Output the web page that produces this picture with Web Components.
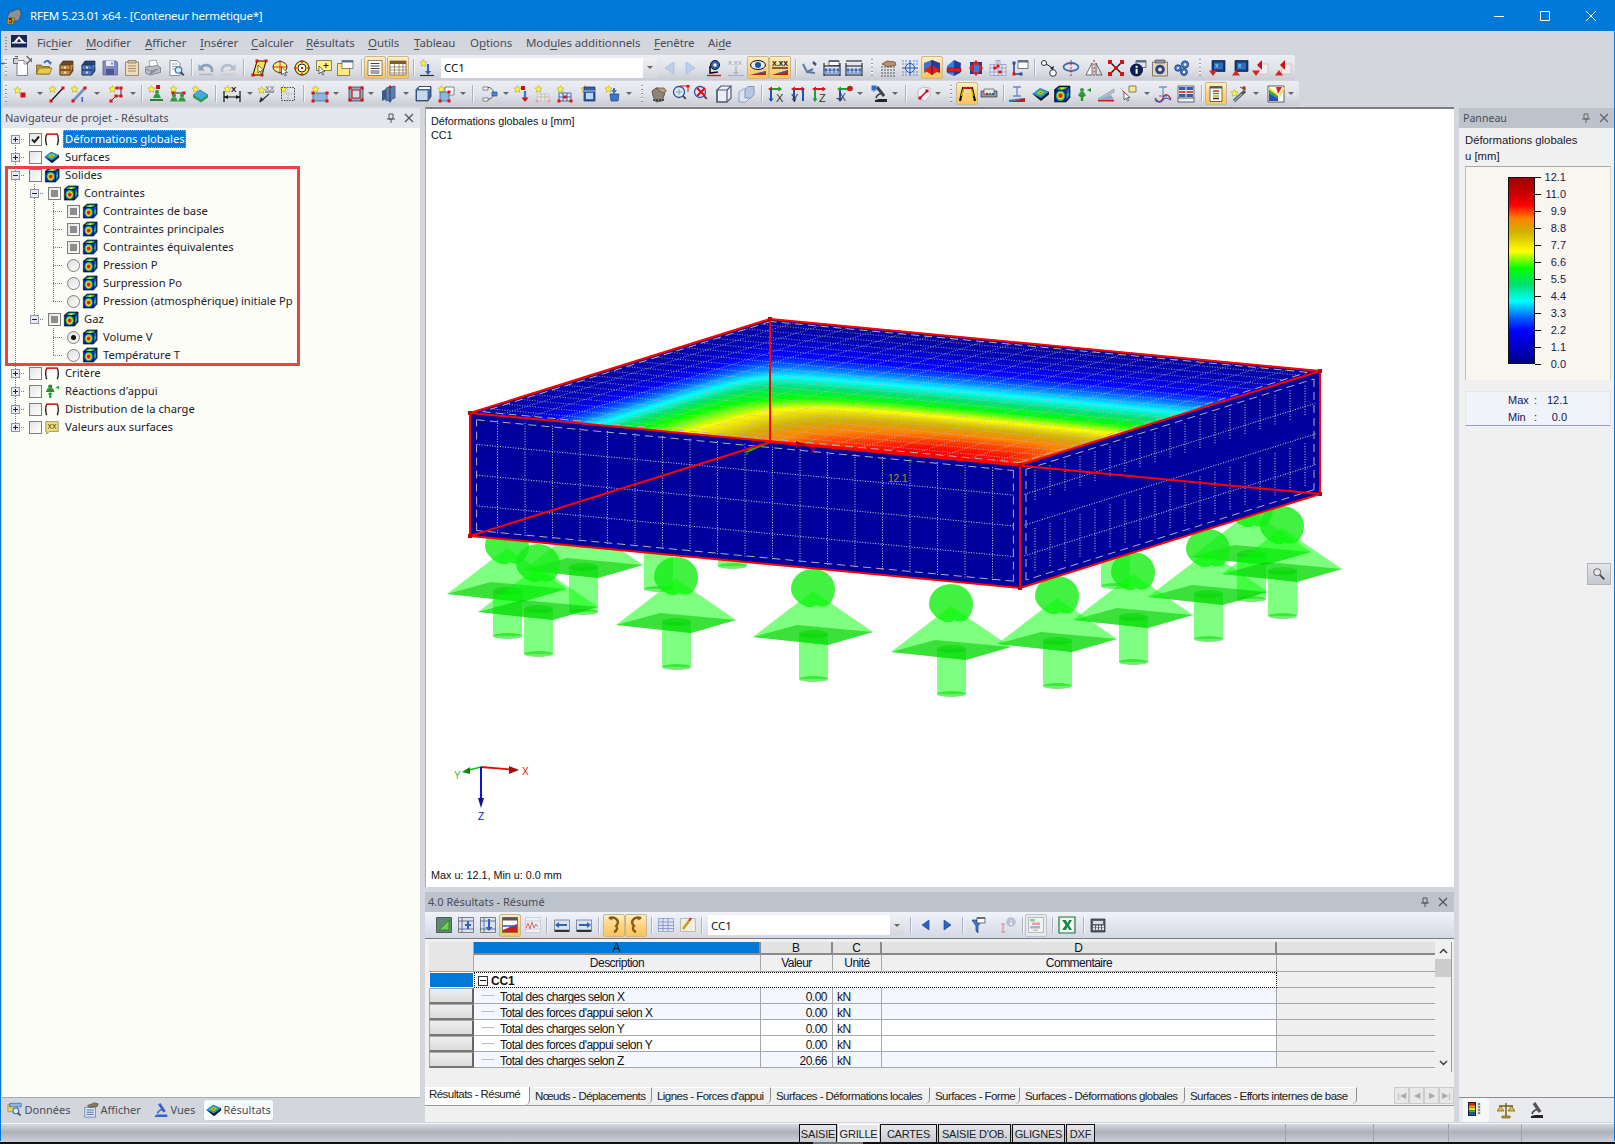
<!DOCTYPE html>
<html lang="fr"><head><meta charset="utf-8"><title>RFEM</title>
<style>html,body{margin:0;padding:0;background:#d3d6dd;overflow:hidden;width:1615px;height:1144px}</style>
<script>
/* ---------- icon library, 18x18 ---------- */
const st=(x=0,y=0)=>`<path transform="translate(${x} ${y})" d="M4.5 .5l1.1 2.3 2.5.3-1.8 1.7.5 2.5-2.3-1.2-2.3 1.2.5-2.5L.9 3.1l2.5-.3z" fill="#fff23a" stroke="#9a9a3a" stroke-width=".5"/>`;
const n=(x,y,c='#e01010',s=3)=>`<rect x="${x-s/2}" y="${y-s/2}" width="${s}" height="${s}" fill="${c}"/>`;
const l=(d,c='#333',w=1,x='')=>`<path d="${d}" fill="none" stroke="${c}" stroke-width="${w}" ${x}/>`;
const f=(d,c,s='none',w=.7)=>`<path d="${d}" fill="${c}" stroke="${s}" stroke-width="${w}"/>`;
const tx=(x,y,t,c='#222',z=6,b=400)=>`<text x="${x}" y="${y}" font-family="Liberation Sans" font-size="${z}" font-weight="${b}" fill="${c}">${t}</text>`;
const drawer=(a,b,e)=>f('M3 6l3-4h10v10l-3 4H3z',a,e)+f('M13 16V6h3',b)+f('M3 6h10v5H3zM3 11h10v5H3z',b,e)+n(8,8.5,'#ddd',2)+n(8,13.5,'#ddd',2);
const mag=(x,y,r=3.2,c='#3b78c8')=>`<circle cx="${x}" cy="${y}" r="${r}" fill="#d8ecff" stroke="${c}" stroke-width="1.3"/>`+l(`M${x+r*.7} ${y+r*.7}l3 3`,'#444',1.8);
const cur=(x,y)=>f(`M${x} ${y}v8l2-2 1.5 3 1.2-.6-1.4-2.8h2.7z`,'#fff','#333',.7);
const hm=(cx,cy)=>`<ellipse cx="${cx}" cy="${cy}" rx="4.6" ry="5.2" fill="#18c050"/><ellipse cx="${cx}" cy="${cy}" rx="3.4" ry="3.8" fill="#f0e020"/><ellipse cx="${cx}" cy="${cy}" rx="2.2" ry="2.4" fill="#e8201c"/>`;
const cube=`<path d="M1.5 4.5L6 1h11v11.5L13 17H1.5z" fill="#0c1a3a" stroke="#0a0f20" stroke-width=".6"/><path d="M2.5 5.5h10V16h-10z" fill="#1018d0"/>`+hm(7.5,10.7)+`<path d="M3.5 4.5l3-2.5h8.5l-2.5 2.5z" fill="#1fb880"/><path d="M7 4.5l1.5-2h3l-1.5 2z" fill="#e6e030"/><path d="M13.5 5.5L16 3v9l-2.5 3z" fill="#1a60d8"/><path d="M13.8 9l1.9-2v3.5l-1.9 2z" fill="#20c060"/>`;
const dia=f('M.5 9L8 3.5 17 7v2.5L9 16z','#10182c')+f('M.5 8.7L8 3 17 6.7 9 13z','#2a8fd8')+f('M3 8.4l5-3.8 6 2.4-5.2 3.9z','#23c45a')+f('M5 8.1L8.2 5.7 12 7.2 8.8 9.6z','#f2d320')+f('M6.8 7.9l1.5-1.1 1.9.7-1.5 1.1z','#e8281c');
const arch=l('M3 16C1.4 11 1.4 7 3.3 3.2','#1a1a1a',1.5)+l('M15 16c1.6-5 1.6-9-.3-12.8','#1a1a1a',1.5)+l('M3.2 3.5h11.6','#d01818',1.8)+l('M2.6 5l.7-1.6M15.4 5l-.7-1.6','#d01818',1.6);
const man=(x,y,c='#2f9a3a')=>`<circle cx="${x}" cy="${y}" r="2" fill="${c}"/><path d="M${x-4} ${y+6}l2-4h4l2 4z" fill="${c}"/>`;
const beads=`<path d="M1 16h16M1 7h16" stroke="#111" stroke-width="1"/><path d="M1 4v13M17 4v13" stroke="#111"/>`+[4,8,12,16].map(x=>`<circle cx="${x-1}" cy="11" r="1.7" fill="#3a6cc0"/><circle cx="${x-1}" cy="14" r="1.7" fill="#7a9ad8"/>`).join('');
const axs=(h,v)=>l('M3 4h11',h,2)+f('M1 4l4-2.5v5z',h)+f('M15 4l-3.5-2.5v5z',h)+l('M4 5v10',v,2)+f('M4 17l-2.5-3.5h5z',v);
const I={
new:f('M4 1.5h7l3.5 3.5v11.5H4z','#fff','#555')+l('M11 1.5V5h3.5','#777',.7),
open:f('M1.5 6h5l1 1.5h7V15h-13z','#b89a2e','#6a5612')+f('M1.5 15l2.5-6h13l-2.5 6z','#e8c84e','#7a6618')+l('M9 4c2-3 5-3 6 0','#3f6fb0',1.8)+f('M15.5 6l-2.5-2.5 3.8-.7z','#3f6fb0'),
cab:drawer('#6b4a26','#c98f46','#4a3014'),
cabb:drawer('#27406f','#4f7ac8','#1c2f54'),
save:f('M2 2h13l1.5 1.5V16H2z','#7f8ac4','#4d5690')+f('M5 2h8v5H5z','#e8eaf4')+f('M5 10h8v6H5z','#4d5690')+n(11,4.5,'#7f8ac4',2),
notes:f('M2.5 3h13v13.5h-13z','#efdcb8','#7a6a50')+f('M5 1.5h8V4H5z','#d8c6a2','#7a6a50')+l('M5 7h8M5 9.5h8M5 12h8','#8a7a60',.8),
print:f('M5 2l7-1 2 6-8 1z','#fff','#888')+f('M1.5 8l12-1.5 3 2v5L6 16l-4.5-2z','#b9bdc6','#6d7078')+f('M6 16v-4.5l10.5-2.5','#8e929c')+l('M2 10.5l4 1','#777',.7),
prev:f('M3 1.5h7l3 3v12H3z','#fff','#666')+l('M5 5h5M5 7.5h6M5 10h3','#888',.8)+mag(11.5,11,3.2),
undo:l('M4 9c2-4 9-4 11 1v3','#8aa1bd',2.6)+f('M1.5 5v6.5h6.5z','#8aa1bd')+l('M2 15.5h14','#aab8cc',1.4),
redo:l('M14 9c-2-4-9-4-11 1v3','#b2bfce',2.6)+f('M16.5 5v6.5h-6.5z','#b2bfce')+l('M2 15.5h14','#c4ced9',1.4),
par:f('M3 16L7 2h9l-4 14z','#ffe23c','#111',1)+n(3,16)+n(7,2)+n(16,2)+n(12,16)+cur(8,6),
scirc:`<ellipse cx="8" cy="8" rx="7" ry="5.5" fill="#fff27e" stroke="#333"/>`+l('M8 1v14M1 8h14','#d01818',.9)+cur(9.5,8),
ring:`<circle cx="9" cy="9" r="7" fill="#ffe23c" stroke="#222"/><circle cx="9" cy="9" r="4" fill="#fff" stroke="#222"/>`+l('M9 1v3M9 14v3M1 9h3M14 9h3','#d01818',1.2)+n(9,9,'#d01818',2),
snote:f('M1.5 1.5h15v10h-15z','#fff27e','#555')+l('M11 4v5M8.5 6.5h5','#222')+cur(4,7),
ywin:f('M1.5 4.5h12v12h-12z','#ffe97a','#555')+f('M6 1.5h11v8H6z','#fff','#555')+f('M6 1.5h11v2H6z','#5a6f8e'),
tlist:f('M2 1.5h14v15H2z','#fff','#555')+l('M4.5 4.5h9M4.5 7h9M4.5 9.5h9M4.5 12h9M4.5 14h9','#444',1.1),
tgrid:f('M1 2h16v14H1z','#fff','#555')+f('M1 2h16v3H1z','#7f5d2a')+l('M1 8h16M1 11h16M1 14h16M5.5 5v11M10 5v11M14 5v11','#8a7a5a',.8),
ldst:st(1,0)+l('M10 5v8','#2e62bc',2)+f('M10 16l-3-4h6z','#2e62bc')+l('M2 16.5h14','#333',1.2),
tl:f('M4 9l9-6v12z','#bcd0ec','#a2b7d8'),
tr:f('M14 9L5 3v12z','#bcd0ec','#a2b7d8'),
tlb:f('M5 9l7-5v10z','#2c62c4','#1e4aa0'),
trb:f('M13 9L6 4v10z','#2c62c4','#1e4aa0'),
pvis:`<circle cx="10" cy="6" r="4.5" fill="#2e62bc" stroke="#111"/><circle cx="10" cy="6" r="1.7" fill="#fff"/>`+l('M5 7v7l8-1','#111',1.6)+l('M2 16.5h14','#d01818',1.4),
xxd:tx(1,6,'X.XX','#9a9a9a',6)+l('M9 7v7','#b0b9c7',1.6)+f('M9 16l-3-3h6z','#b0b9c7')+l('M1 16.5h16','#a8b0c0',1),
eye:`<ellipse cx="9" cy="6" rx="7.5" ry="4.5" fill="#dfe8f8" stroke="#111"/><circle cx="9" cy="6" r="3" fill="#1f4fa8"/>`+f('M1 16l16-4v4z','#d01818')+f('M1 16l16-4v1.5L1 16z','#2e62bc'),
xx2:tx(1,7,'X.XX','#111',7,700)+l('M1 9h16','#111',1.2)+f('M1 16l16-5v5z','#d01818')+f('M1 16l16-5v2L1 16z','#2e62bc'),
gears:l('M2 5l4 8 6-3M6 13l8 1','#5e7a9e',2)+l('M12 3l3 3','#3d5679',2.5),
bm1:f('M6 1.5h10v5H6z','#fff','#444')+f('M6 1.5h10v1.5H6z','#4a5e7c')+beads,
bm2:beads+l('M1 2h16','#111',1),
hand:[3,6,9,12,15].map(x=>[8,11,14,17].map(y=>n(x,y,'#555',1.4)).join('')).join('')+f('M3 5l5-3 8 1 1 3-8 2z','#b9906c','#5c3c20'),
tgt:[2,5,13,16].map(x=>[2,5,13,16].map(y=>n(x,y,'#5577b8',1.3)).join('')).join('')+`<circle cx="9" cy="9" r="4.5" fill="#d8e8ff" stroke="#1e50b0"/>`+l('M9 1v16M1 9h16','#1e50b0',1),
pl1:f('M9 1l8 3v10L9 11z','#1e3fa0')+f('M9 1L1 4v10l8-3z','#3b6fd0')+f('M1 11l8-5 8 5-8 5z','#e01c1c')+f('M9 1v15','none','#111'),
pl2:f('M9 1l7 3-1 10-6 3z','#1e3fa0')+f('M9 1L2 7v7l7 3z','#3b7ae0')+f('M2 9h14v4H2z','#e01c1c','#7a0a0a',.5),
pl3:f('M3 3h12v12H3z','#1e3fa0')+f('M9 1l7 8-7 8-7-8z','#e01c1c')+f('M7 6h5v7H7z','#3b7ae0'),
pgrid:f('M7 1.5h4v4h6v11H1v-11h6z','#e4e8f4','#8a94b8')+l('M1 9h16M1 13h16M5 5v12M9 1v16M13 5v12','#8a94b8',.8)+n(6,9)+n(11,13)+n(9,7),
wline:f('M7 1.5h10v8H7z','#fff','#444')+f('M7 1.5h10v2H7z','#5a6f8e')+l('M3 4v11h7','#26509a',1.6)+n(3,4,'#26509a')+n(3,15)+n(10,15,'#26509a'),
cconn:`<circle cx="4" cy="4" r="2.5" fill="#fff" stroke="#333"/><circle cx="13" cy="14" r="3.3" fill="#fff" stroke="#333"/>`+l('M6 5l5 3 2 3','#222',1)+f('M14 7l-1 4-3-2z','#222'),
rot:`<ellipse cx="9" cy="8" rx="7.5" ry="4" fill="none" stroke="#3a6cc0" stroke-width="1.8"/>`+l('M9 1v16','#d01818',1,'stroke-dasharray="2 1.5"'),
mir:f('M1 16L7 4v12z','#fff','#333')+f('M17 16L11 4v12z','#d9dce4','#333')+l('M9 1v16','#d01818',1,'stroke-dasharray="2 1.5"'),
xred:l('M3 3l12 12M15 3L3 15','#111',1.4)+n(3,3,'#e01010',4)+n(15,3,'#e01010',4)+n(3,15,'#e01010',4)+n(15,15,'#e01010',4)+n(9,9,'#e01010',4),
info:f('M7 1.5h10v7H7z','#dfe2ea','#444')+f('M7 1.5h10v2H7z','#5a6f8e')+`<circle cx="7.5" cy="11" r="6.5" fill="#0c1e58"/><rect x="6.6" y="9.8" width="2" height="5" fill="#fff"/><rect x="6.6" y="6.8" width="2" height="2" fill="#fff"/>`,
setb:f('M1.5 3h15v14h-15z','#e8d6b4','#555')+f('M4 1h10v3H4z','#8a94a8','#555')+`<circle cx="9" cy="10.5" r="4.8" fill="#2a4488"/><circle cx="9" cy="10.5" r="1.9" fill="#efe0c4"/>`,
gearb:`<circle cx="12" cy="5.5" r="3.6" fill="#4d7fd0" stroke="#1d3f88"/><circle cx="5" cy="9" r="3.2" fill="#4d7fd0" stroke="#1d3f88"/><circle cx="11" cy="13" r="3.4" fill="#4d7fd0" stroke="#1d3f88"/><circle cx="12" cy="5.5" r="1.2" fill="#fff"/><circle cx="5" cy="9" r="1.1" fill="#fff"/><circle cx="11" cy="13" r="1.2" fill="#fff"/>`,
bq1:f('M4 1.5h13v11H4z','#16386e','#0e2244')+f('M6 3.5h9v7H6z','#2a6cc0')+tx(7,9,'X','#bfe','5')+f('M5 17L1 11.5h8z','#e02020'),
bq2:f('M4 1.5h13v11H4z','#16386e','#0e2244')+f('M6 3.5h9v7H6z','#2a6cc0')+tx(7,9,'X','#bfe','5')+f('M5 11L1 16.5h8z','#e02020'),
rq1:f('M8 5h9v10H8z','#eee','#bbb')+f('M11 1l-5 5 5 5z','#c8141c')+f('M5 17L1 11.5h8z','#e02020'),
rq2:f('M8 5h9v10H8z','#eee','#bbb')+f('M11 1l-5 5 5 5z','#c8141c')+f('M5 11L1 16.5h8z','#e02020'),
/* row 2 */
snode:st(1,1)+n(11,10,'#d81010',5),
sline:st(0,0)+l('M3 16L15 3','#111',1.2)+n(3,16)+n(15,3),
sbeam:st(0,0)+l('M3 16L15 3','#7a8fc0',2.6)+n(3,16)+n(15,3)+tx(11,17,'I','#2a3fa0',8,700),
spoly:st(0,0)+l('M3 16l5-5h5V3H9','#333',1)+n(3,16)+n(8,11)+n(13,11)+n(13,3)+n(9,3),
sman:st(0,0)+n(11,2,'#d01010',4)+man(10,7,'#2f9a3a')+f('M3 16h13v-2H3z','#2c7f38'),
s2man:st(0,0)+l('M4 8h11','#222')+n(15,8)+n(4,8)+man(5,10.5,'#2f9a3a')+man(13,10.5,'#2f9a3a'),
sslab:st(0,0)+f('M2 10l7-5 8 5-7 5z','#46a8e0','#1c6a9c')+f('M2 10l8 5v2.5l-8-5zM10 15l7-5v2.5l-7 5z','#2e9e44'),
sdim:st(0,0)+l('M1 6v11M17 6v11','#111',1.2)+l('M1 12h16','#111',1)+f('M1 12l4-2v4zM17 12l-4-2v4z','#111')+tx(8,7,'X','#111',8,700),
sxx:st(0,1)+tx(8,6,'XX','#666',7)+l('M8 7h9','#555',1)+l('M12 9l-9 8','#333',1.2)+f('M2 17l2-5 3 3z','#333'),
sdot:st(0,0)+l('M2.5 2.5h13v13h-13z','#444',1,'stroke-dasharray="1.5 1.2"')+l('M9 2v14M2 9h14','#888',.7,'stroke-dasharray="1 1.5"'),
srect:st(0,0)+f('M2 8h14v8H2z','#8cb6e0','#2e5e98')+n(2,8)+n(16,16)+n(2,16)+n(16,8),
frame:f('M2 2h14v14H2z','#8ea9cc','#333')+f('M5 5h8v8H5z','#d6deea','#c01818',1.2)+n(3,3,'#e01010',3)+n(15,3,'#e01010',3)+n(3,15,'#e01010',3)+n(15,15,'#e01010',3),
arrows:f('M5 3l9-2v12l-9 3z','#5c7fb0','#2c4a74')+f('M1 6l4-2v10l-4 2z','#3b5a88')+l('M9 1v16','#333',.9)+f('M9 0l-2 3h4z','#d01010')+f('M9 18l-2-3h4z','#2050c0'),
cube1:f('M2 4.5L5 1.5h12v10l-3 4.5H2z','#3a6ab0','#223')+f('M3 5.5h10.5V15H3z','#c8d7ec')+f('M5 2h11v2H5z','#fff'),
srect2:st(0,0)+f('M8 2h9v8H8z','#fff','#556')+f('M3 7h9v9H3z','#8cb6e0','#2e5e98')+n(3,16)+n(12,16)+n(12,7),
conn:l('M2 2.5h7l3 3v6l-3 2.5H2','#555',.9)+f('M2 2h5v3H2zM2 13h5v3H2z','#fff','#555')+f('M11 7h5v4h-5z','#3f88dd','#1c4f98'),
sarr:st(0,0)+n(10,3,'#d01010',4)+l('M12 6v7','#3e78d0',2.4)+f('M12 17l-3.5-4.5h7z','#d01010'),
pgs:st(0,0)+f('M3 9h12v7H3z','#e3e8f4','#b8c0d8')+l('M3 12h12M7 9v7M11 9v7','#c8b088',.8)+n(3,16,'#f4a0a0')+n(15,16,'#f4a0a0'),
sgrd:st(0,0)+f('M3 8h12v8H3z','#dbe6f8','#1c3f88')+l('M3 12h12M7 8v8M11 8v8','#1c3f88',.8)+n(3,16)+n(15,16)+n(9,12),
spile:st(0,0)+f('M4 2h11v14H4z','#3462a6','#162a4a')+f('M6 8h7v6H6z','#bcd6f4')+l('M4 6h11','#b0c8e8'),
sbuck:st(0,0)+f('M6 9h9l-1 7H7z','#3c78c8','#1e3f78')+l('M10 3v6','#3c78c8',2)+f('M10 9l-3-4h6z','#3c78c8'),
handb:f('M2 6l4-3 6 1 3 4-3 8-6 1-3-6z','#8f8478','#3e3830')+f('M6 3h8l2.5 3-4 2z','#b9a080','#5c4a30')+[4,7,10,13].map(x=>n(x,15,'#333',1.8)).join(''),
zwin:mag(7,7,5.5,'#2a4f94')+l('M7 4v6M4 7h6','#888',.8)+l('M8 1h8v6','#d01010',.9)+n(16,1),
zx:mag(7,7,5.5,'#2a4f94')+l('M4 3l8 8M12 3l-8 8','#e01010',2.2),
cwire:f('M2 5l4-4h10v12l-4 4H2z','#eaeef6','#4d5a70',1.2)+f('M2 5h10v12H2z','none','#4d5a70',1.2)+l('M12 5l4-4','#4d5a70',1.2),
cube2:f('M2 7l4-3h7v9l-4 4H2z','#dbe4f2','#7a8aa8')+f('M8 5l3-3.5h6v8L14 13H8z','#b6c8e2','#6a7a98'),
ax:axs('#d81818','#1e50c0')+l('M5 4l9 0','#20a030',2)+tx(9,17,'X','#333',11),
ay:axs('#d81818','#1e50c0')+tx(1,17,'Y','#333',11)+l('M13 4v12','#1e50c0',2),
az:axs('#d81818','#20a030')+tx(8,17,'Z','#333',11),
amx:axs('#20a030','#1e50c0')+tx(0,16,'-X','#333',10)+`<circle cx="14" cy="3.5" r="2.8" fill="#d01818"/>`,
mic:f('M8 14h8v3H4v-2z','#222')+l('M5 13c1-4 6-6 8-2','#444',1.6)+l('M6 2l7 9','#444',3)+n(3,3,'#2f6fd0',5)+l('M2 7l3-3','#2a9fd0',1),
cred:f('M4 5l5-3 7 1v8l-5 5-7-2z','#f0f1f4','#aab')+l('M6 13l7-7','#d01010',1.6)+n(6,13,'#d01010',3)+n(13,6,'#d01010',3),
fhl:l('M2 16L5 3h9l3 13','#111',2.2)+l('M5 3h9','#d81010',2)+l('M3.5 11L5.5 4','#d8b000',1.5)+l('M15 11L13.5 4','#d8b000',1.5),
capsule:f('M1 6h16v6H1z','#9098a6','#333')+f('M4 4h10v5H4z','#e6e8ee','#555')+n(7,9,'#d01818',2)+n(10,9,'#2fa040',2)+n(13,9,'#3050d0',2),
beam:l('M5 2h8M9 2v9M5 11h8','#6d87c4',1.3)+f('M1 17l16-4v4z','#c61818')+f('M1 17l16-4-2 0L1 15z','#3c60c8'),
heat:dia,
hcube:cube,
rsup:man(8,5,'#2f9a3a')+l('M8 16V10','#1e9a2e',2.4)+f('M8 9l-3 3h6z','#1e9a2e')+f('M17 3l-4 2 4 2z','#1e9a2e'),
wedge:f('M1 14l16-10v3L5 14z','#b8c0d0','#8a94a8')+f('M1 15h16l-3-5z','#8ea8c8')+f('M1 15h16v1.5H1z','#d01818'),
ssel:f('M9 1h7v6H9z','#ffe97a','#555')+cur(4,7)+l('M2 5l5 5','#d01818',.9),
cbeam:l('M5 2h8M9 2v9M5 11h8','#7c93c8',1.3)+l('M1 13c3 5 6 5 8 0s5-4 8 1','#c01818',1.2)+l('M1 15c3 3 6 3 8 0s5-2 8 0','#3060c8',1.2),
tbl:f('M1 1h16v16H1z','#eef1f6','#333')+f('M2 2h6.5v3H2zM9.5 2H16v3H9.5zM2 9h6.5v3H2zM9.5 9H16v3H9.5z','#3060a8')+f('M2 6h6.5v2H2zM9.5 6H16v2H9.5z','#e04848')+l('M1 13h16','#555'),
doc:f('M3 1.5h12v15H3z','#fff','#333')+f('M3 1.5h12v2H3z','#555')+l('M6 6h6','#d01818',1.4)+l('M6 8.5h6','#2fa040',1.4)+l('M6 11h6','#d8a000',1.4)+l('M6 13.5h6','#222',1.4),
tools:st(0,4)+l('M4 16L15 6','#555',3.2)+l('M4 16l8-7','#8cb6e0',1.2)+n(14,3,'#d01818',3)+l('M10 2l6 3','#555',1),
rainb:f('M1 1h16v16H1z','#fff','#222')+f('M2 2l7 7-7 7z','#1e9a2e')+f('M2 2l9 7v2L2 5z','#ffe02a')+f('M2 5l9 6v2L2 9z','#2fa840')+f('M2 9l9 4v3H2z','#2050c0')+f('M12 10l5-8 1 1-5 9z','#ffe02a')+f('M9 2h6l-4 7z','#e01c1c'),
/* tree */
portal:arch,
surf:dia,
solid:cube,
react:`<circle cx="7" cy="4" r="2.4" fill="#2f8a38"/><path d="M2 10l2-4h6l2 4z" fill="#2f8a38"/><path d="M7 17v-5" stroke="#19a52a" stroke-width="2.4"/><path d="M7 10l-3 3h6zM17 3l-4 2 4 2z" fill="#19a52a"/>`,
valxx:f('M2 3h14v11H6l-3 3v-3H2z','#f0e07c','#7a6a20')+tx(4,11,'XX','#222',7.5),
/* results toolbar */
rt1:f('M1.5 1.5h15v15h-15z','#5e8a72','#333')+f('M4 14L14 4v10z','#6cd050','#2e6a20'),
rt2:f('M1.5 1.5h15v15h-15z','#dbe2ee','#555')+l('M1 5h16M1 13h16M5 1v16','#5a6a88',.9)+l('M11 5v8M8 9h6','#2e62bc',2),
rt3:f('M1.5 1.5h15v15h-15z','#dbe2ee','#555')+l('M1 5h16M1 13h16M5 1v16','#5a6a88',.9)+l('M10 3v9','#2e62bc',2)+f('M10 15l-3.5-4h7z','#2e62bc'),
rt4:f('M1.5 1.5h15v15h-15z','#fff','#444')+f('M1.5 1.5h15v3h-15z','#556')+f('M2 14l14-6v8H2z','#d81818')+l('M2 10l14 0','#2e62bc',1.6),
rt5:f('M1.5 1.5h15v15h-15z','#eef0f6','#c0c4d0')+l('M1 5h16M1 13h16','#c0c4d0',.8)+l('M2 12l2-5 2 6 2-7 2 6 2-4 2 3','#d86868',1),
rt6:f('M1.5 4h15v10h-15z','#dbe2ee','#5a6a88')+l('M1.5 15h15','#333',2)+l('M4 9h10','#2e62bc',2)+f('M2 9l4-3v6z','#2e62bc'),
rt7:f('M1.5 4h15v10h-15z','#dbe2ee','#5a6a88')+l('M1.5 15h15','#333',2)+l('M4 9h10','#2e62bc',2)+f('M16 9l-4-3v6z','#2e62bc'),
rt8:l('M4 2c8-2 11 4 7 8 2 2 1 5-2 6','#8a5a1a',2.4)+f('M3 2l5-1.5-1 4z','#8a5a1a'),
rt9:l('M14 2C6 0 3 6 7 10c-2 2-1 5 2 6','#8a5a1a',2.4)+f('M15 2l-5-1.5 1 4z','#8a5a1a'),
rt10:f('M1.5 2.5h15v13h-15z','#dfe4f4','#8a94b0')+l('M1 6h16M1 9.5h16M1 12.5h16M6 2v13M11 2v13','#7a8ac8',.8),
rt11:f('M1.5 2.5h15v13h-15z','#f0eee2','#b0a888')+l('M4 13l6-8','#c8a020',2.6)+l('M10 5l2-3','#c83030',2.2),
fil:f('M3 4h10l-4 6v7l-2-2v-5z','#3e78d0','#1e3f78')+f('M8 1.5h8V7H8z','#fff','#333')+f('M8 1.5h8v1.5H8z','#5a6f8e'),
sinfo:`<circle cx="12" cy="6" r="4.8" fill="#b9c2d6"/>`+l('M4 8v8M2 8h4M2 16h4','#d88',1.1)+l('M12 4v.6M12 6v3','#fff',1.4),
bar:f('M1.5 1.5h15v15h-15z','#f0f2f0','#a0a8a0')+f('M3 3h5v2.5H3z','#a0c0a0')+f('M5 6.5h8V9H5z','#e0a0a0')+f('M3 10h10v2.5H3z','#a0b8d8')+f('M6 13.5h5V15H6z','#d8c088'),
xl:f('M1 1h16v16H1z','#e8f4e8','#1c7a3c',1.2)+f('M3 3h12v12H3z','#fff')+f('M4 4h4l1.5 3L11 4h3l-3 5 3 5h-3l-1.5-3L8 14H4l3.5-5z','#1c8a44'),
calc:f('M2 3h14v13H2z','#5a6270','#222')+f('M4 5h10v3H4z','#d8dce4')+[5,8,11,14].map(x=>[10.5,13].map(y=>n(x,y,'#fff',1.8)).join('')).join(''),
/* bottom tabs */
dat:f('M1 3h11v8H1z','#f3cd53','#8a7a30')+f('M3 1.5h13v4H3z','#8cb6e0','#2e5e98')+mag(10,10,3.2),
aff:f('M2 6h12v11H2z','#dfe9fb','#3a62a8')+l('M4 9h8M4 11.5h8M4 14h8','#3a62a8',1)+f('M5 4l8-3 4 1-1 3-9 1z','#8c7a62','#4a3c2c'),
vue:f('M4 14h12v3H2v-1z','#3a62c8')+l('M5 13c1-4 6-6 8-2','#3a62c8',1.8)+l('M7 2l6 9','#3a62c8',3.2),
bars:f('M1 1h8v14H1z','#222')+f('M2 2h6v2.2H2z','#e01818')+f('M2 4.4h6v2.2H2z','#f8a010')+f('M2 6.8h6v2.2H2z','#e6e020')+f('M2 9.2h6v2.2H2z','#20c030')+f('M2 11.6h6v2.6H2z','#1c50d0')+[3,6,9,12].map(y=>n(12,y,'#8a8a8a',2.4)).join(''),
bal:l('M9 2v13','#6a5a10',1.4)+l('M2 5h14','#6a5a10',1.5)+f('M0 10h7l-3.5-5zM11 10h7l-3.5-5z','#e0c040','#6a5a10')+f('M5 15h8v2H5z','#c8a020','#6a5a10'),
mcr:f('M8 14h8v3H4v-2z','#222')+l('M5 13c1-4 6-6 8-2','#444',1.6)+l('M7 2l6 9','#555',3.2),
frame5:f('M2 13c0-3 2-7 3-8l8-3c2 0 3 3 3 5s-2 6-3 7z','#8a9098','#444')+f('M3 11h7l-2 6H2z','#e0a020','#7a5a10')+tx(3.5,16,'5','#222',7,700),
mdi:f('M0 0h18v14H0z','#15255a')+f('M1 8h16v1.5H1z','#fff')+f('M9 1l6 7H3z','#fff')+f('M9 4l2.5 4h-5z','#15255a'),
lens:`<circle cx="7" cy="7" r="4" fill="#e8e8e8" stroke="#555"/>`+l('M10 10l5 5','#444',2)
};
class RfIcon extends HTMLElement{connectedCallback(){if(this.shadowRoot)return;const s=this.getAttribute('size')||18;
 this.attachShadow({mode:'open'}).innerHTML=`<style>:host{display:inline-flex;width:${s}px;height:${s}px;flex:none}svg{display:block}</style><svg width="${s}" height="${s}" viewBox="0 0 18 18">${I[this.getAttribute('name')]||''}</svg>`}}
customElements.define('rf-icon',RfIcon);

const UI='"Noto Sans","DejaVu Sans",sans-serif', AR='"Liberation Sans",Arial,sans-serif';

class RfTitle extends HTMLElement{connectedCallback(){this.attachShadow({mode:'open'}).innerHTML=`<style>
:host{display:flex;align-items:center;height:31px;background:#0078d7;color:#fff;font:11.5px/31px ${UI};flex:none;padding-left:5px}
.t{margin-left:7px;letter-spacing:-.22px;flex:1;white-space:nowrap}.b{width:46px;height:31px;display:flex;align-items:center;justify-content:center}
svg{display:block}</style><rf-icon name="frame5"></rf-icon><span class="t">RFEM 5.23.01 x64 - [Conteneur hermétique*]</span>
<span class="b"><svg width="12" height="12"><path d="M1 6.5h10" stroke="#fff"/></svg></span>
<span class="b"><svg width="12" height="12"><path d="M1.5 1.5h9v9h-9z" fill="none" stroke="#fff"/></svg></span>
<span class="b" style="margin-right:1px"><svg width="12" height="12"><path d="M1 1l10 10M11 1L1 11" stroke="#fff"/></svg></span>`}}
customElements.define('rf-title',RfTitle);

class RfMenu extends HTMLElement{connectedCallback(){const it=[['Fic<u>h</u>ier',37],['<u>M</u>odifier',86],['<u>A</u>fficher',145],['<u>I</u>nsérer',200],['<u>C</u>alculer',251],['<u>R</u>ésultats',306],['<u>O</u>utils',368],['<u>T</u>ableau',414],['O<u>p</u>tions',470],['Mod<u>u</u>les additionnels',526],['<u>F</u>enêtre',654],['Ai<u>d</u>e',708]];
 this.attachShadow({mode:'open'}).innerHTML=`<style>
:host{display:block;height:24px;flex:none;background:#d3d6dd;color:#4a4c58;font:11.5px/24px ${UI};position:relative}
.row{display:grid;grid-template-columns:37px 49px 59px 55px 51px 55px 62px 46px 56px 56px 128px 54px 1fr;height:24px;align-items:center;white-space:nowrap}
.lead{display:flex;align-items:center;gap:4px;padding-left:5px}.g{width:2px;height:13px;background:repeating-linear-gradient(#8a8d96 0 1px,transparent 1px 3px)}
.ctl{display:flex;justify-content:flex-end;gap:8px;padding-right:5px;align-items:center}svg{display:block}
span{letter-spacing:-.1px}u{text-underline-offset:2px}</style>
<div class="row"><div class="lead"><i class="g"></i><rf-icon name="mdi" size="16"></rf-icon></div>${it.map(i=>`<span>${i[0]}</span>`).join('')}
<div class="ctl"><svg width="8" height="10"><path d="M0 8.5h8" stroke="#666" stroke-width="1.4"/></svg><svg width="8" height="10"><path d="M.5 3.5h5v5h-5zM2 1.5h5.5v5" fill="#cfd2d8" stroke="#666"/></svg><svg width="9" height="10"><path d="M.5 1l8 8M8.5 1l-8 8" stroke="#666" stroke-width="1.5"/></svg></div></div>`}}
customElements.define('rf-menu',RfMenu);

/* toolbar: items with a centre x, turned into flow gaps */
class RfToolbar extends HTMLElement{connectedCallback(){const w=+this.getAttribute('end');let x=+this.getAttribute('start'),h='';
 const start=x;
 for(const tok of this.getAttribute('items').trim().split(/\s+/)){const [nm,cs]=tok.split('@');const c=+cs;let W=22,html='';
  if(nm==='|'){W=1;html='<i class="sep"></i>'}else if(nm===':'){W=2;html='<i class="grip"></i>'}else if(nm==='v'){W=5;html='<i class="dd"></i>'}
  else if(nm.startsWith('combo')){W=+nm.slice(5)||216;html=`<div class="combo" style="width:${W}px"><span>CC1</span><b><i class="dd"></i></b></div>`}
  else{const hl=nm[0]==='!',pale=nm[0]==='~';html=`<span class="btn${hl?' hl':''}${pale?' pale':''}"><rf-icon name="${hl||pale?nm.slice(1):nm}"></rf-icon></span>`}
  const m=c-W/2-x;h+=`<div class="it" style="margin-left:${m}px;width:${W}px">${html}</div>`;x=c+W/2}
 this.attachShadow({mode:'open'}).innerHTML=`<style>
:host{display:flex;align-items:center;height:25px;flex:none;width:${w-start}px;margin-left:${start}px;background:linear-gradient(#eceef3,#dfe2e8 55%,#c9ccd4);border-radius:0 3px 3px 0}
.it{display:flex;justify-content:center;align-items:center;flex:none;height:24px}.btn{display:flex;width:22px;height:23px;align-items:center;justify-content:center;box-sizing:border-box;border-radius:2px}
.hl{background:linear-gradient(#fff0c4,#ffd47e 50%,#fbc45a);border:1px solid #c9b68c}.pale{background:#e6e8ee;border:1px solid #bfc3cc}
.sep{display:block;width:1px;height:17px;background:#aeb2bc;box-shadow:1px 0 #f4f5f8}.grip{display:block;width:2px;height:17px;background:repeating-linear-gradient(#9498a2 0 1px,#fff 1px 2px,transparent 2px 4px)}
.dd{display:block;width:0;height:0;border:3px solid transparent;border-top:3.5px solid #666;border-bottom:0}
.combo{display:flex;height:20px;background:#fff;align-items:center;font:11.5px ${UI};color:#111;box-sizing:border-box}.combo span{flex:1;padding-left:3px}.combo b{width:14px;height:20px;display:flex;align-items:center;justify-content:center;background:linear-gradient(#f0f1f4,#d4d6dc)}
</style>${h}`}}
customElements.define('rf-toolbar',RfToolbar);

/* tree */
class RfRow extends HTMLElement{connectedCallback(){const g=(this.getAttribute('g')||'').split('');const mk=this.getAttribute('mark')||'box',ic=this.getAttribute('icon'),sel=this.hasAttribute('selected'),ex=this.getAttribute('ex');
 const cell=g.map((k,i)=>{const last=i===g.length-1;let inner=(last&&ex)?`<span class="ex">${ex==='+'?'<svg width="9" height="9"><path d="M2 4.5h5M4.5 2v5" stroke="#223"/></svg>':'<svg width="9" height="9"><path d="M2 4.5h5" stroke="#223"/></svg>'}</span>`:'';return `<span class="c ${k}">${inner}</span>`}).join('');
 const m={box:'<span class="ck"></span>',tick:'<span class="ck"><svg width="11" height="11"><path d="M2 5.5l2.5 2.5L9 2.5" fill="none" stroke="#222" stroke-width="2"/></svg></span>',part:'<span class="ck"><i></i></span>',radio:'<span class="ra"></span>',on:'<span class="ra"><i></i></span>'}[mk];
 this.attachShadow({mode:'open'}).innerHTML=`<style>
:host{display:flex;align-items:center;height:18px;font:11.2px/18px ${UI};color:#20202c;white-space:nowrap}
.c{display:flex;align-items:center;justify-content:center;width:19px;height:18px;flex:none;position:relative;--d:repeating-linear-gradient(#777 0 1px,transparent 1px 2px);--h:repeating-linear-gradient(90deg,#777 0 1px,transparent 1px 2px)}
.c:first-child{width:18px}
.v{background:var(--d) center/1px 100% no-repeat}.t{background:var(--d) center/1px 100% no-repeat,var(--h) right center/10px 1px no-repeat}
.l{background:var(--d) center top/1px 50% no-repeat,var(--h) right center/10px 1px no-repeat}.s{background:var(--d) center bottom/1px 50% no-repeat,var(--h) right center/10px 1px no-repeat}
.e{background:var(--h) right center/10px 1px no-repeat}
.ex{display:block;width:9px;height:9px;box-sizing:border-box;background:#e9ebf3;outline:1px solid #8f95a8;outline-offset:-1px}.ex svg{display:block}
.ck{display:flex;align-items:center;justify-content:center;width:13px;height:13px;box-sizing:border-box;border:1px solid #7e7e7e;background:linear-gradient(135deg,#e4e4e4,#fff);margin-left:4px;flex:none}.ck i{display:block;width:7px;height:7px;background:#8d8d8d}
.ra{display:flex;align-items:center;justify-content:center;width:13px;height:13px;box-sizing:border-box;border:1px solid #7e7e7e;border-radius:50%;background:linear-gradient(135deg,#ddd,#fff);margin-left:4px;flex:none}.ra i{display:block;width:5px;height:5px;border-radius:50%;background:#111}
rf-icon{margin-left:2px}
.x{margin-left:3px;padding:0 1px 0 2px;height:18px;box-sizing:border-box}.sel{background:#0078d7;color:#fff;outline:1px dotted #e8a030;outline-offset:-1px}
</style>${cell}${m}<rf-icon name="${ic}" size="16"></rf-icon><span class="x${sel?' sel':''}"><slot></slot></span>`}}
customElements.define('rf-row',RfRow);

class RfNavigator extends HTMLElement{connectedCallback(){this.attachShadow({mode:'open'}).innerHTML=`<style>
:host{display:flex;flex-direction:column;width:418px;flex:none;margin-top:2px;margin-left:2px;height:1014px;padding-bottom:2px;box-sizing:border-box}
.h{display:flex;align-items:center;height:20px;padding:0 6px 0 3px;font:11px/20px ${UI};color:#4a4c58;background:#e3e6ec;flex:none}.h span{flex:1}
.h svg{margin-left:8px;display:block}
.tree{flex:1;background:#fdfdf8;border:1px solid #a6a8ae;border-width:0 0 1px 0;padding:2px 0 0 4px;position:relative;box-sizing:border-box}
.red{position:absolute;left:3px;top:38px;width:295px;height:200px;box-sizing:border-box;border:3px solid #e84444;pointer-events:none}
.tabs{display:flex;height:20px;align-items:center;font:11px/20px ${UI};color:#4a4c58;margin-top:2px;flex:none;padding-left:3px}
.tab{display:flex;align-items:center;gap:1.5px;height:20px;box-sizing:border-box;padding:0 0 0 2px;flex:none}.tab rf-icon{flex:none}
.act{background:linear-gradient(#f2fafd,#fff);box-shadow:0 0 1px #63b0c0;border-radius:2px}
</style>
<div class="h"><span>Navigateur de projet - Résultats</span>
<svg width="10" height="11"><path d="M3 1h4v5H3zM1 6h8M5 6v4" fill="none" stroke="#555"/></svg><svg width="10" height="11"><path d="M1 1l8 8M9 1L1 9" stroke="#555" stroke-width="1.3"/></svg></div>
<div class="tree">
<rf-row g="s" ex="+" mark="tick" icon="portal" selected>Déformations globales</rf-row>
<rf-row g="t" ex="+" icon="surf">Surfaces</rf-row>
<rf-row g="t" ex="-" icon="solid">Solides</rf-row>
<rf-row g="vt" ex="-" mark="part" icon="solid">Contraintes</rf-row>
<rf-row g="vvt" mark="part" icon="solid">Contraintes de base</rf-row>
<rf-row g="vvt" mark="part" icon="solid">Contraintes principales</rf-row>
<rf-row g="vvt" mark="part" icon="solid">Contraintes équivalentes</rf-row>
<rf-row g="vvt" mark="radio" icon="solid">Pression P</rf-row>
<rf-row g="vvt" mark="radio" icon="solid">Surpression Po</rf-row>
<rf-row g="vvl" mark="radio" icon="solid">Pression (atmosphérique) initiale Pp</rf-row>
<rf-row g="vl" ex="-" mark="part" icon="solid">Gaz</rf-row>
<rf-row g="vnt" mark="on" icon="solid">Volume V</rf-row>
<rf-row g="vnl" mark="radio" icon="solid">Température T</rf-row>
<rf-row g="t" ex="+" icon="portal">Critère</rf-row>
<rf-row g="t" ex="+" icon="react">Réactions d'appui</rf-row>
<rf-row g="t" ex="+" icon="portal">Distribution de la charge</rf-row>
<rf-row g="l" ex="+" icon="valxx">Valeurs aux surfaces</rf-row>
<div class="red"></div></div>
<div class="tabs"><span class="tab" style="width:76px"><rf-icon name="dat" size="16"></rf-icon>Données</span><span class="tab" style="width:70px"><rf-icon name="aff" size="16"></rf-icon>Afficher</span><span class="tab" style="width:53px"><rf-icon name="vue" size="16"></rf-icon>Vues</span><span class="tab act" style="width:69px"><rf-icon name="heat" size="16"></rf-icon>Résultats</span></div>`}}
customElements.define('rf-navigator',RfNavigator);

/* 3D scene */
const CM=[[0,[0,0,139]],[.174,[0,0,255]],[.245,[0,96,255]],[.335,[0,255,255]],[.424,[0,224,112]],[.513,[0,255,0]],[.602,[255,255,0]],[.71,[208,176,0]],[.782,[255,128,0]],[.853,[255,0,0]],[.906,[208,0,0]],[1,[160,0,0]]];
const cmap=v=>{v=Math.max(0,Math.min(1,v));for(let i=1;i<CM.length;i++)if(v<=CM[i][0]){const a=CM[i-1],b=CM[i],k=(v-a[0])/(b[0]-a[0]);return 'rgb('+a[1].map((c,j)=>Math.round(c+(b[1][j]-c)*k)).join(',')+')'}return 'rgb(160,0,0)'};
const lerpT=(T,x)=>{if(x<=T[0][0])return T[0][1];for(let i=1;i<T.length;i++)if(x<=T[i][0]){const a=T[i-1],b=T[i];return a[1]+(b[1]-a[1])*(x-a[0])/(b[0]-a[0])}return T[T.length-1][1]};
const TS=[[0,.03],[.1,.09],[.14,.174],[.23,.335],[.3,.5],[.38,.6],[.5,.78],[.6,.89],[.8,1],[.95,.97],[1,.9]],TT=[[0,1],[.08,.95],[.17,.87],[.25,.77],[.33,.63],[.41,.52],[.55,.345],[.71,.19],[.85,.08],[1,.02]];
const fld=(s,t)=>{const a=lerpT(TS,s),b=lerpT(TT,t+.05*(s-.6)*(s-.6));return Math.pow(Math.pow(a,-5)+Math.pow(b,-5),-1/5)};
function scene(){
 const P=(s,t)=>[470+550*s+300*t,414+52*s-94*t],Fr=(s,h)=>[470+550*s,414+52*s+123*h],R=(t,h)=>[1020+300*t,466-94*t+123*h];
 const pt=a=>a[0].toFixed(1)+','+a[1].toFixed(1);
 const ln=(a,b,c,w,d='')=>`<line x1="${a[0].toFixed(1)}" y1="${a[1].toFixed(1)}" x2="${b[0].toFixed(1)}" y2="${b[1].toFixed(1)}" stroke="${c}" stroke-width="${w}" ${d?`stroke-dasharray="${d}"`:''}/>`;
 let o='';
 const sup=(x,y)=>{const p=(a,b)=>(x+a)+','+(y+b);return `<g>
<path d="M${x-22} ${y}a22 20 0 0 1 44 0c0 7-3 13-7 16-4 2-9 2-12 0-3 3-8 3-13 0-7-4-12-10-12-16z" fill="#14ee14" fill-opacity=".8"/>
<rect x="${x-14}" y="${y+45}" width="29" height="45" fill="#00ff00" fill-opacity=".5"/><ellipse cx="${x+.5}" cy="${y+90}" rx="14.5" ry="3" fill="#00d800" fill-opacity=".55"/><ellipse cx="${x+.5}" cy="${y+45}" rx="14.5" ry="4" fill="#00c000" fill-opacity=".5"/>
<polygon points="${p(0,2)} ${p(-60,48)} ${p(15,56)} ${p(60,43)}" fill="#00ff00" fill-opacity=".5"/>
<polygon points="${p(-60,48)} ${p(-16,36)} ${p(60,43)} ${p(15,56)}" fill="#00c800" fill-opacity=".55"/></g>`};
 [[732,477],[658,500],[1115,497],[1251,510],[583,523],[1282,527],[507,547],[1208,550],[538,565],[1133,573],[676,578],[813,590],[1057,597],[951,605]].forEach(c=>o+=sup(c[0],c[1]));
 /* faces */
 o+=`<polygon points="${pt(Fr(0,0))} ${pt(Fr(1,0))} ${pt(Fr(1,1))} ${pt(Fr(0,1))}" fill="#00009c"/><polygon points="${pt(R(0,0))} ${pt(R(1,0))} ${pt(R(1,1))} ${pt(R(0,1))}" fill="#00009c"/>`;
 /* heat map */
 const NS=120,NT=70;let q='';
 for(let i=0;i<NS;i++)for(let j=0;j<NT;j++){const s=i/NS,t=j/NT,ds=1/NS,dt=1/NT,c=cmap(fld(s+ds/2,t+dt/2));
  q+=`<polygon points="${pt(P(s,t))} ${pt(P(s+ds,t))} ${pt(P(s+ds,t+dt))} ${pt(P(s,t+dt))}" fill="${c}" stroke="${c}" stroke-width=".7"/>`}
 o+=q;
 const dot='1 1.6',G='#b9b9b9';
 for(let i=1;i<20;i++){o+=ln(P(i/20,.015),P(i/20,.985),G,.8,dot);o+=ln(P(.012,i/20),P(.988,i/20),G,.8,dot)}
 const dsh='8 5',DG='#b0b0b8';
 o+=ln(P(.012,.02),P(.988,.02),DG,1,dsh)+ln(P(.988,.02),P(.988,.98),DG,1,dsh)+ln(P(.988,.98),P(.012,.98),DG,1,dsh)+ln(P(.012,.98),P(.012,.02),DG,1,dsh);
 /* front face grid */
 const GW='#d8d8c8';
 for(let i=1;i<20;i++)o+=ln(Fr(i/20,.04),Fr(i/20,.96),GW,1,dot);
 for(let j=1;j<4;j++)o+=ln(Fr(.012,j/4),Fr(.988,j/4),GW,1,dot);
 o+=ln(Fr(.012,.05),Fr(.988,.05),DG,1,dsh)+ln(Fr(.988,.05),Fr(.988,.95),DG,1,dsh)+ln(Fr(.988,.95),Fr(.012,.95),DG,1,dsh)+ln(Fr(.012,.95),Fr(.012,.05),DG,1,dsh);
 /* right face grid */
 for(let i=1;i<20;i++){o+=ln(R(i/20,.08),R(i/20,.32),GW,1,dot);o+=ln(R(i/20,.55),R(i/20,.9),GW,1,dot)}
 for(let j=1;j<4;j++)o+=ln(R(.015,j/4),R(.985,j/4),GW,1,dot);
 o+=ln(R(.02,.05),R(.98,.05),DG,1,dsh)+ln(R(.98,.05),R(.98,.95),DG,1,dsh)+ln(R(.98,.95),R(.02,.95),DG,1,dsh)+ln(R(.02,.95),R(.02,.05),DG,1,dsh);
 /* local axes and label */
 const A=[770,320],B=[470,414],C=[470,537],D=[1320,372],E=[1020,466],Eb=[1020,589],Db=[1320,495],Hb=[770,443];
 o+=`<path d="M770 443v72" stroke="#0000ee" stroke-width="1.4" stroke-dasharray="6 3"/><path d="M770 443l-22 9" stroke="#00d000" stroke-width="2"/><text x="744" y="456" font-family="Liberation Sans" font-size="9" fill="#00d000">Y</text>`;
 o+=`<text x="888" y="483" font-family="Liberation Sans" font-size="10" fill="#b09a00">12.1</text>`;
 /* red edges */
 for(const [a,b] of [[A,D],[D,E],[E,B],[B,A],[B,C],[C,Eb],[Eb,Db],[Db,D],[E,Eb],[A,Hb],[Hb,C],[Hb,Db]])o+=ln(a,b,'#ff0000',2);
 for(const a of [A,B,C,D,Db,E,Eb])o+=`<rect x="${a[0]-2}" y="${a[1]-2}" width="4" height="4" fill="#c00000"/>`;
 o+=`<path d="M796 442l10 3.5-10 3.5z" fill="#a00000"/><text x="810" y="454" font-family="Liberation Sans" font-size="8" fill="#e01010">X</text>`;
 /* triad */
 o+=`<path d="M481 768l36 3" stroke="#e01010" stroke-width="1.8"/><path d="M519 771l-10-4v8z" fill="#a01010"/><text x="522" y="776" font-family="Liberation Sans" font-size="10" fill="#e01010">X</text>
<path d="M481 768l-16 4" stroke="#10c010" stroke-width="1.8"/><path d="M462 773l8-5v7z" fill="#0a8a0a"/><text x="454" y="780" font-family="Liberation Sans" font-size="10" fill="#10d010">Y</text>
<path d="M481 768v34" stroke="#1010e0" stroke-width="2"/><path d="M481 809l-3-10h6z" fill="#101090"/><text x="478" y="821" font-family="Liberation Sans" font-size="10" fill="#1010e0">Z</text>`;
 return o}

class RfView extends HTMLElement{connectedCallback(){this.attachShadow({mode:'open'}).innerHTML=`<style>
:host{display:flex;flex-direction:column;justify-content:space-between;position:relative;height:780px;width:1029px;background:#fff;box-sizing:border-box;border-top:2px solid #7e7e7e;border-left:1px solid #a8aab0;padding:5px 5px 5px;font:10.8px/14px ${AR};color:#111;flex:none;overflow:hidden}
svg{position:absolute;left:0;top:0}.t{position:relative}</style>
<svg width="1030" height="780" viewBox="426 110 1030 780">${scene()}</svg>
<div class="t">Déformations globales u [mm]<br>CC1</div><div class="t">Max u: 12.1, Min u: 0.0 mm</div>`}}
customElements.define('rf-view',RfView);

class RfResults extends HTMLElement{connectedCallback(){
 const rows=[['Total des charges selon X','0.00','a'],["Total des forces d'appui selon X",'0.00','a'],['Total des charges selon Y','0.00','w'],["Total des forces d'appui selon Y",'0.00','w'],['Total des charges selon Z','20.66','a']];
 const tb=`rt1@444 rt2@466 rt3@488 !rt4@510 rt5@533 |@546 rt6@562 rt7@584 |@598 !rt8@614 !rt9@636 |@651 rt10@666 rt11@688 |@701 combo196@806 |@910 tlb@926 trb@947 |@962 fil@978 sinfo@1008 |@1022 ~bar@1036 |@1052 xl@1067 |@1083 calc@1098`;
 this.attachShadow({mode:'open'}).innerHTML=`<style>
:host{display:flex;flex-direction:column;height:230px;width:1029px;flex:none;margin-top:5px;background:#f0f0f0;font:12px ${AR}}
.h{display:flex;align-items:center;height:20px;flex:none;background:#bcc3cd;color:#4a4c58;font:11px/20px ${UI};padding:0 6px 0 3px}.h span{flex:1}.h svg{margin-left:8px;display:block}
rf-toolbar{margin-left:0!important}
.tb{height:25px;flex:none;background:linear-gradient(#f0f3fa,#d4d8e4);border-bottom:1px solid #7a7c82}
.tbl{display:grid;grid-template-columns:45px 287px 72px 49px 395px 159px;grid-template-rows:13px 17px 16px repeat(5,16px);position:relative;margin:3px 0 0 4px;width:1023px;height:131px;flex:none;box-sizing:border-box;color:#111;letter-spacing:-.52px}
.c{box-sizing:border-box;border-bottom:1px solid #a6a8ac;border-right:1px solid #a6a8ac;padding:0 4px;line-height:18px;white-space:nowrap;overflow:hidden}
.l{background:#e2e2e2;text-align:center;border-bottom:2px solid #8a8a8a;border-right:2px solid #8a8a8a;line-height:13px;letter-spacing:0}.lA{background:#0078d7;}
.s{background:#f0f0f0;text-align:center;color:#101030;line-height:17px}.ne{background:#e6e6e6;grid-row:1/3}.rh{background:linear-gradient(#eee,#dcdcdc);border:1px solid #a6a6a6;border-right:2px solid #666;border-bottom:2px solid #777;padding:0}.rb{background:#0078d7;border:1px solid #fff}
.a{background:#f4f7fe}.w{background:#fff}.x{background:#efefef;border-right:0}.n{text-align:right;padding-right:5px}
.desc{padding-left:26px;position:relative}.desc:before{content:"";position:absolute;left:8px;top:7px;width:12px;height:1px;background:#bbb}
.cc{grid-column:2/6;background:#fff;font-weight:700;border:1px dotted #111;padding:1px 0 0 3px;display:flex;align-items:center;gap:3px;letter-spacing:-.2px}.cc i{width:9px;height:9px;border:1px solid #333;position:relative;display:block;box-sizing:content-box;flex:none;width:8px;height:8px}.cc i:after{content:"";position:absolute;left:1px;right:1px;top:3.5px;height:1px;background:#111}
.sb{position:absolute;right:0;top:0;width:16px;height:130px;background:#f0f0f0;display:flex;flex-direction:column;justify-content:space-between;align-items:center;border-right:1px solid #9a9a9a}
.sb i{display:block;width:16px;height:18px;background:#cdcdcd;position:absolute;top:17px}.sb svg{display:block;margin:6px 0}
.tabs{display:flex;height:18px;align-items:stretch;margin-top:14px;border-bottom:1px solid #9a9a9a;position:relative;font-size:11.5px;letter-spacing:-.55px;flex:none;color:#222}
.tab{height:17px;box-sizing:border-box;border:1px solid #8e8e8e;border-width:0 1px 0 0;line-height:16px;background:#f0f0f0;padding-left:5px;white-space:nowrap;border-top:1px solid #fff;border-radius:0 0 5px 0}
.tab.on{background:#fff;border-top:0;height:18px;padding-left:4px;margin-bottom:-1px;z-index:1;line-height:15px}
.nav{position:absolute;right:0;top:0;height:17px;display:flex}.nav span{width:15px;height:17px;box-sizing:border-box;border:1px solid #ccc;background:#e8e8e8;color:#aaa;font-size:8px;line-height:15px;text-align:center;letter-spacing:0}
</style>
<div class="h"><span>4.0 Résultats - Résumé</span><svg width="10" height="11"><path d="M3 1h4v5H3zM1 6h8M5 6v4" fill="none" stroke="#555"/></svg><svg width="10" height="11"><path d="M1 1l8 8M9 1L1 9" stroke="#555" stroke-width="1.3"/></svg></div>
<rf-toolbar class="tb" start="425" end="1453" items="${tb}" style="background:linear-gradient(#f0f3fa,#d4d8e4);width:1029px;height:26px;border-radius:0"></rf-toolbar>
<div class="tbl"><div class="c ne" style="border-bottom:1px solid #999"></div><div class="c l lA">A</div><div class="c l">B</div><div class="c l">C</div><div class="c l">D</div><div class="c l" style="border-right:0"></div>
<div class="c s">Description</div><div class="c s">Valeur</div><div class="c s">Unité</div><div class="c s">Commentaire</div><div class="c s x"></div>
<div class="c rh rb"></div><div class="c cc"><i></i>CC1</div><div class="c x"></div>
${rows.map(r=>`<div class="c rh"></div><div class="c ${r[2]} desc">${r[0]}</div><div class="c ${r[2]} n">${r[1]}</div><div class="c ${r[2]}">kN</div><div class="c ${r[2]}"></div><div class="c x"></div>`).join('')}
<div class="sb"><svg width="9" height="6"><path d="M1 5l3.5-3.5L8 5" fill="none" stroke="#333" stroke-width="1.4"/></svg><i></i><svg width="9" height="6"><path d="M1 1l3.5 3.5L8 1" fill="none" stroke="#333" stroke-width="1.4"/></svg></div></div>
<div class="tabs"><div class="tab on" style="width:105px">Résultats - Résumé</div><div class="tab" style="width:122px">Nœuds - Déplacements</div><div class="tab" style="width:119px">Lignes - Forces d'appui</div><div class="tab" style="width:159px">Surfaces - Déformations locales</div><div class="tab" style="width:90px">Surfaces - Forme</div><div class="tab" style="width:165px">Surfaces - Déformations globales</div><div class="tab" style="width:172px">Surfaces - Efforts internes de base</div>
<div class="nav"><span>|◀</span><span>◀</span><span>▶</span><span>▶|</span></div></div>`}}
customElements.define('rf-results',RfResults);

class RfPanel extends HTMLElement{connectedCallback(){
 const vals=['12.1','11.0','9.9','8.8','7.7','6.6','5.5','4.4','3.3','2.2','1.1','0.0'];
 const grad=[...CM].reverse().map(c=>`rgb(${c[1].join(',')}) ${((1-c[0])*100).toFixed(1)}%`).join(',');
 this.attachShadow({mode:'open'}).innerHTML=`<style>
:host{display:flex;flex-direction:column;width:155px;height:1014px;flex:none;margin:2px 0 0 5px;font:11.3px/16px ${AR};color:#20202c;position:relative}
.h{display:flex;align-items:center;height:20px;background:#bcc3cd;color:#4a4c58;padding:0 5px 0 4px;flex:none;font:10.6px/20px ${UI}}.h span{flex:1}.h svg{margin-left:8px;display:block}
.body{background:#f0f0f0;flex:1;padding:4px 3px 0 6px;border-bottom:1px solid #8e8e8e;box-sizing:border-box;position:relative}
.ttl{height:16px;line-height:16px}.u{height:16px;line-height:16px}
.lg{height:214px;background:#f9f6ef;border-top:1px solid #a6a8ae;border-right:1px solid #d4d4d4;border-left:1px solid #bdbdbd;margin-top:2px;box-sizing:border-box;display:flex;padding:1.5px 0 0 42px;color:#161650;font-size:11px}
.bar{width:27px;height:187px;margin-top:8.5px;background:linear-gradient(${grad});border:1px solid #111;box-sizing:border-box;flex:none}
.sc{display:flex;flex-direction:column;width:31px;flex:none}.sc div{height:17px;line-height:17px;text-align:right;position:relative;white-space:nowrap}.sc div:before{content:"";position:absolute;left:0;top:8px;width:6px;height:1px;background:#111}
.mm{margin-top:11px;height:35px;background:#f0f3fa;border:1px solid #e2e6ef;border-bottom:1px solid #9a9ad8;box-sizing:border-box;display:grid;grid-template-columns:26px 13px 20px;justify-content:start;padding-left:42px;line-height:17px;color:#161650;text-align:left;font-size:11px}.mm span:nth-child(3n){text-align:right}
.lens{position:absolute;right:3px;top:435px;width:24px;height:22px;background:linear-gradient(#e4e6ea,#c4c7ce);border:1px solid #b0b3ba;box-sizing:border-box;display:flex;align-items:center;justify-content:center}
.bt{height:24px;display:flex;align-items:center;flex:none;background:#e9ebef;padding-left:4px}.bt span{display:flex;align-items:center;justify-content:center;width:26px;height:24px;margin-right:4px}.bt .on{background:#f6f8fa;border-radius:2px}
</style><div class="h"><span>Panneau</span><svg width="10" height="11"><path d="M3 1h4v5H3zM1 6h8M5 6v4" fill="none" stroke="#666"/></svg><svg width="10" height="11"><path d="M1 1l8 8M9 1L1 9" stroke="#666" stroke-width="1.3"/></svg></div>
<div class="body"><div class="ttl">Déformations globales</div><div class="u">u [mm]</div>
<div class="lg"><div class="bar"></div><div class="sc">${vals.map(v=>`<div>${v}</div>`).join('')}</div></div>
<div class="mm"><span>Max</span><span>:</span><span>12.1</span><span>Min</span><span>:</span><span>0.0</span></div>
<div class="lens"><rf-icon name="lens" size="16"></rf-icon></div></div>
<div class="bt"><span class="on"><rf-icon name="bars"></rf-icon></span><span><rf-icon name="bal"></rf-icon></span><span><rf-icon name="mcr"></rf-icon></span></div>`}}
customElements.define('rf-panel',RfPanel);

class RfStatus extends HTMLElement{connectedCallback(){const b=[['SAISIE',38],['GRILLE',41,1],['CARTES',57],["SAISIE D'OB.",73],['GLIGNES',53],['DXF',29]];
 this.attachShadow({mode:'open'}).innerHTML=`<style>
:host{display:flex;height:19px;flex:none;background:linear-gradient(#d7d9df,#aeb1b9 45%,#cdd0d7);font:11px/18px ${AR};color:#222;padding-left:799px;box-sizing:border-box;border-top:1px solid #f2f3f5;align-items:stretch}
.b{border:1px solid #111;border-width:1px 1px 0 1px;box-sizing:border-box;text-align:center;margin-right:1px;background:linear-gradient(#e6e7eb,#c9ccd3);white-space:nowrap;letter-spacing:-.2px}.u{border-color:#fff;background:#e6e7eb}
.d{width:1px;background:#a0a3aa;flex:none}</style>
${b.map(i=>`<div class="b${i[2]?' u':''}" style="width:${i[1]}px">${i[0]}</div>`).join('')}
<div class="d" style="margin-left:189px"></div><div class="d" style="margin-left:87px"></div><div class="d" style="margin-left:74px"></div><div class="d" style="margin-left:72px"></div>`}}
customElements.define('rf-status',RfStatus);

class RfApp extends HTMLElement{connectedCallback(){
 const r1=`:@6 new@22 open@44 cab@66 cabb@88 save@110 notes@132 print@153 prev@176 |@191 undo@206 redo@228 |@243 par@259 scirc@281 ring@302 snote@324 ywin@345 |@361 !tlist@375 !tgrid@398 |@413 ldst@427 combo@549 tl@670 tr@690 pvis@714 xxd@736 !eye@758 !xx2@780 |@795 gears@810 bm1@832 bm2@854 :@872 hand@888 tgt@910 !pl1@932 pl2@954 pl3@976 pgrid@998 wline@1020 |@1034 cconn@1049 rot@1071 mir@1094 xred@1116 info@1138 setb@1160 gearb@1182 :@1200 bq1@1217 bq2@1240 rq1@1260 rq2@1283`;
 const r2=`:@6 snode@21 v@40 sline@57 sbeam@79 v@97 spoly@117 v@133 |@141 sman@156 s2man@178 sslab@200 |@215 sdim@232 v@250 sxx@266 sdot@288 |@303 srect@320 v@336 frame@356 v@371 arrows@390 v@406 cube1@423 srect2@446 v@463 |@472 conn@490 v@506 sarr@522 pgs@543 sgrd@565 spile@589 sbuck@613 v@629 :@642 handb@659 zwin@681 zx@702 cwire@724 cube2@746 |@761 ax@776 ay@799 az@820 amx@845 v@860 mic@880 v@895 |@905 cred@923 v@938 :@951 !fhl@967 capsule@989 |@1003 beam@1017 heat@1041 hcube@1062 rsup@1083 wedge@1106 ssel@1129 v@1147 cbeam@1163 tbl@1186 |@1201 !doc@1216 tools@1239 v@1256 rainb@1276 v@1291`;
 this.attachShadow({mode:'open'}).innerHTML=`<style>
:host{display:flex;flex-direction:column;width:1615px;height:1144px;overflow:hidden;box-sizing:border-box;position:relative;background:#d3d6dd}
.bars{display:flex;flex-direction:column;gap:1px;flex:none;height:51px;background:#d3d6dd}
.work{display:flex;flex:none;height:1017px}
.mid{display:flex;flex-direction:column;width:1029px;margin-left:5px;flex:none;margin-top:1px}
.edge{position:absolute;top:31px;bottom:3px;width:1px;background:#0078d7}
.blk{height:3px;background:#111;flex:none;display:flex}.blk i{display:block;width:50px;height:3px;background:#777;margin-left:813px}
</style>
<rf-title></rf-title><rf-menu></rf-menu>
<div class="bars"><rf-toolbar start="3" end="1295" items="${r1}"></rf-toolbar><rf-toolbar start="3" end="1299" items="${r2}"></rf-toolbar></div>
<div class="work"><rf-navigator></rf-navigator><div class="mid"><rf-view></rf-view><rf-results></rf-results></div><rf-panel></rf-panel></div>
<rf-status></rf-status><div class="blk"><i></i></div>
<div class="edge" style="left:0"></div><div class="edge" style="right:0"></div>`}}
customElements.define('rf-app',RfApp);
</script></head>
<body><rf-app></rf-app></body></html>
